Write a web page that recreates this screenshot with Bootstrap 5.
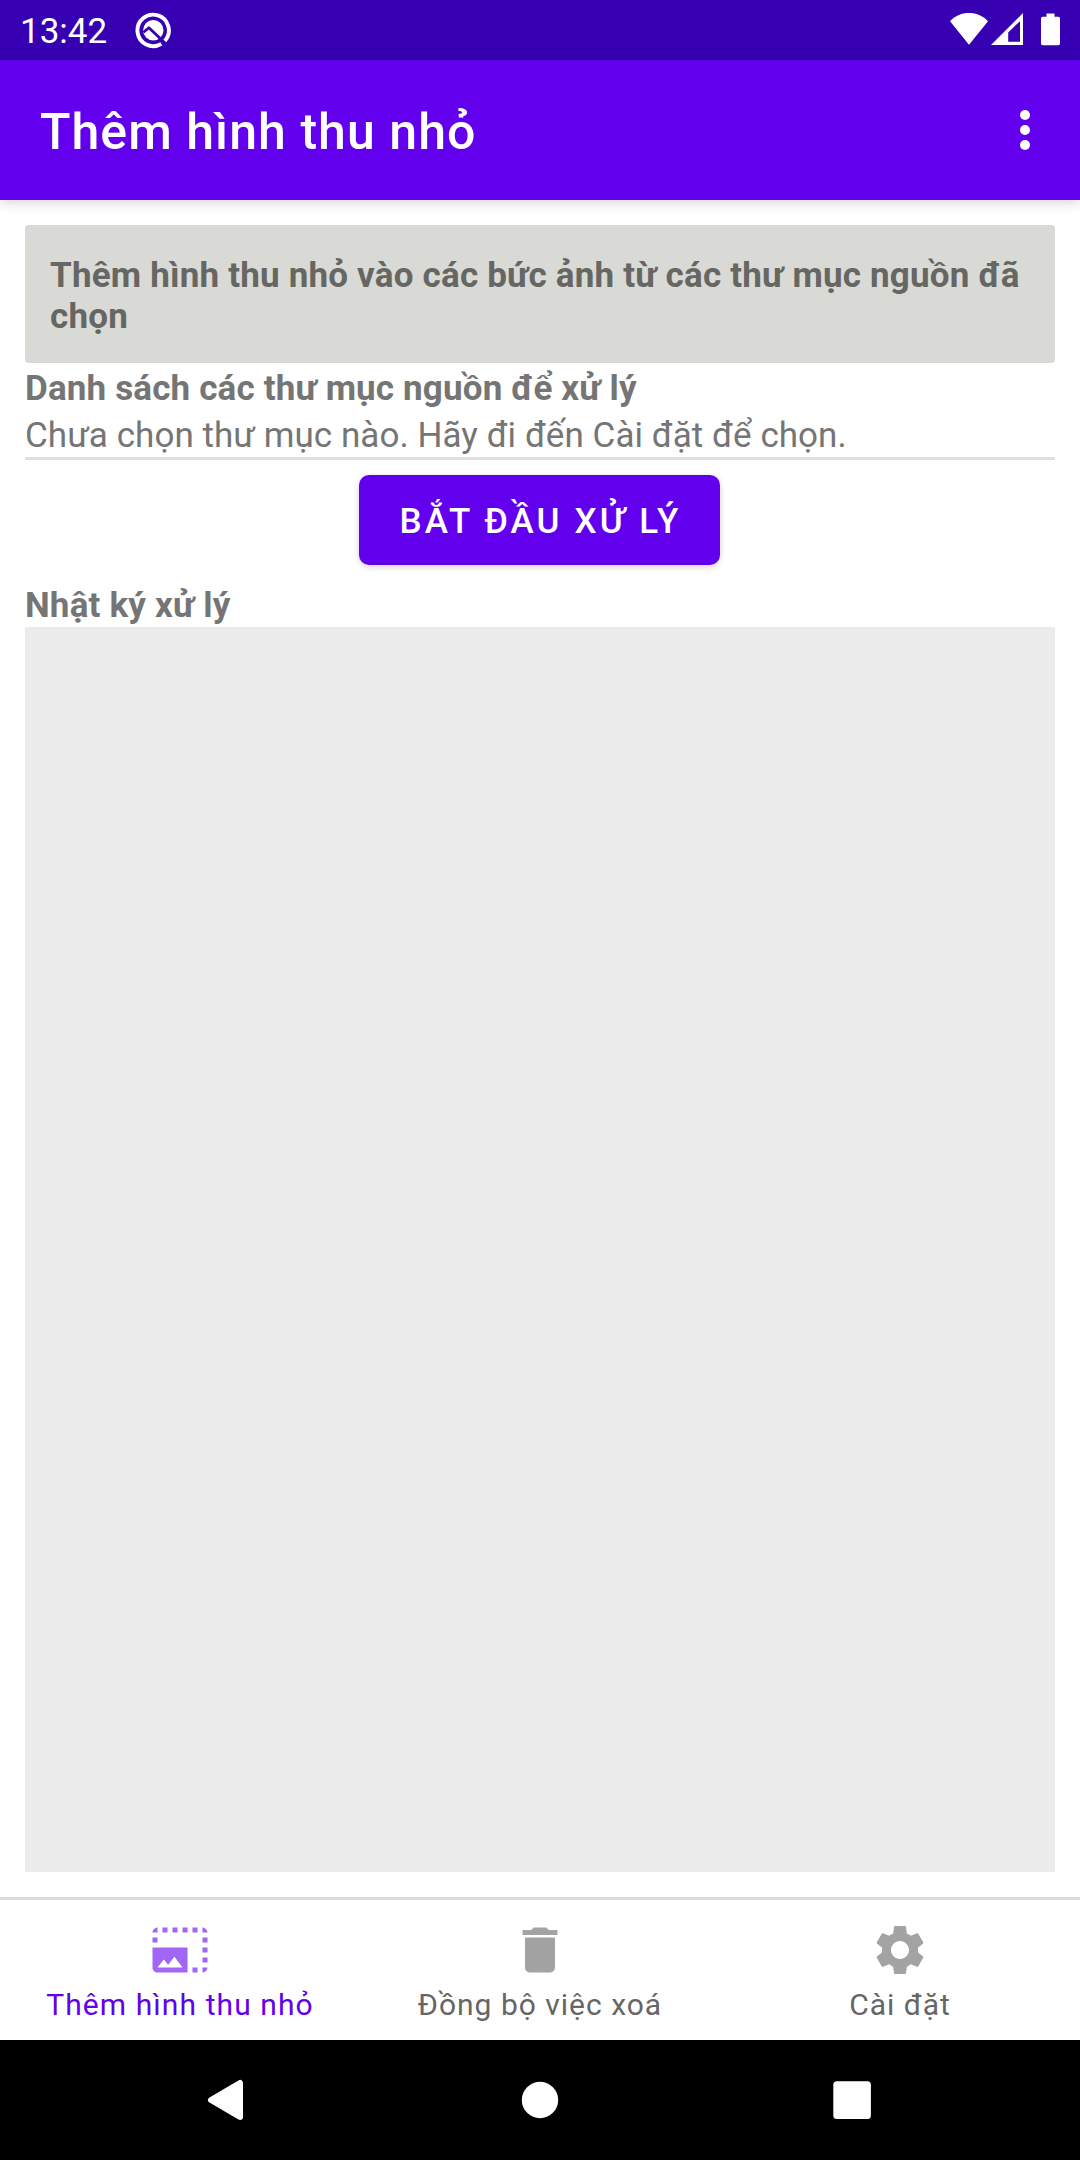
<!DOCTYPE html>
<html lang="vi">
<head>
<meta charset="utf-8">
<meta name="viewport" content="width=device-width, initial-scale=1">
<title>Thêm hình thu nhỏ</title>
<link href="https://cdn.jsdelivr.net/npm/bootstrap@5.3.0/dist/css/bootstrap.min.css" rel="stylesheet">
<style>
body{font-family:Roboto,"Noto Sans",sans-serif;font-size:35px;line-height:41px;color:#757575;background:#fff}
.screen{width:1080px;height:2160px;overflow:hidden}
.statusbar{height:60px;background:#3700b3;padding:0 15px 0 20px}
.clock{width:113px;padding-top:2px}
.appbar{height:140px;background:#6200ee;padding:0 45px 0 40px;box-shadow:0 2px 12px rgba(0,0,0,.18);--bs-navbar-brand-font-size:50px}
.appbar .navbar-brand{font-weight:500;letter-spacing:.021em;line-height:60px;padding:0;margin:4px 0 0}
.main-area{padding:25px}
.hint{height:138px;background:#d9dad5;color:#666663;border-radius:4px;padding:30px 20px 0 25px;letter-spacing:.19px}
.source-title{padding-top:5px;height:52px;letter-spacing:.15px}
.source-text{height:42px;letter-spacing:.05px}
.rule{height:3px;background:#e0e0e0}
.start-btn{--bs-btn-bg:#6200ee;--bs-btn-hover-bg:#6200ee;width:361px;height:90px;margin:15px 0 0 334px;border:0;border-radius:10px;padding:2px 0 0 2px;font-size:35px;font-weight:500;letter-spacing:.0893em;line-height:41px;box-shadow:0 2px 6px rgba(0,0,0,.18)}
.log-title{height:62px;padding-top:20px;letter-spacing:.17px}
.log-box{background:#ebebeb}
.tabs{height:143px;border-top:3px solid #dcdcdc}
.tabs .nav-link{width:360px;padding:20px 0 0;font-size:30px;line-height:35px;letter-spacing:.0333em;color:#666}
.tabs .nav-link svg{fill:#a3a3a3;margin-bottom:7px}
.tabs .nav-link.active{color:#6200ee;letter-spacing:.036em}
.tabs .nav-link.active svg{fill:#a166f5}
.sysbar{height:120px;background:#000;padding:0 72px}
svg{display:block;flex:none}
</style>
</head>
<body>
<div class="screen d-flex flex-column">
  <header class="statusbar d-flex align-items-center text-white">
    <span class="clock">13:42</span>
    <svg width="40" height="40" fill="none"><circle cx="20.3" cy="20.2" r="10.2" fill="#fff"/><path d="M10.500 22.300 15.900 17.700 31.500 32.500" stroke="#3700b3" stroke-width="2.800" stroke-linejoin="round"/><path d="M31.8 30.9A15.7 15.7 0 1 0 28.3 33.8" stroke="#fff" stroke-width="3.9"/></svg>
    <svg class="ms-auto" width="120" height="40" fill="#fff">
      <path d="M5 11.3C10.2 5.6 17 3 24 3S37.8 5.6 43 11.3L24 34.7Z"/>
      <path fill-rule="evenodd" d="M46 35 78 3V35ZM63.2 31.8H75V11.2L63.2 22.5Z"/>
      <path d="M101.5 3.5H109.5V6.7H113.3Q115 6.7 115 8.4V33.5Q115 35.2 113.3 35.2H97.7Q96 35.2 96 33.5V8.4Q96 6.7 97.7 6.7H101.5Z"/>
    </svg>
  </header>
  <nav class="appbar navbar flex-nowrap justify-content-between position-relative">
    <h1 class="navbar-brand text-white">Thêm hình thu nhỏ</h1>
    <svg width="20" height="60" fill="#fff"><circle cx="10" cy="15" r="5"/><circle cx="10" cy="30" r="5"/><circle cx="10" cy="45" r="5"/></svg>
  </nav>
  <main class="main-area d-flex flex-column flex-grow-1">
    <div class="hint fw-bold">Thêm hình thu nhỏ vào các bức ảnh từ các thư mục nguồn đã chọn</div>
    <div class="source-title fw-bold">Danh sách các thư mục nguồn để xử lý</div>
    <div class="source-text">Chưa chọn thư mục nào. Hãy đi đến Cài đặt để chọn.</div>
    <div class="rule"></div>
    <button class="start-btn btn btn-primary" type="button">BẮT ĐẦU XỬ LÝ</button>
    <div class="log-title fw-bold">Nhật ký xử lý</div>
    <div class="log-box flex-grow-1"></div>
  </main>
  <nav class="tabs nav flex-nowrap">
    <a class="nav-link active d-flex flex-column align-items-center" href="#"><svg width="60" height="60" viewBox="0 0 24 24"><path d="M21 15h2v2h-2v-2zm0-4h2v2h-2v-2zm2 8h-2v2c1 0 2-1 2-2zM13 3h2v2h-2V3zm8 4h2v2h-2V7zm0-4v2h2c0-1-1-2-2-2zM1 7h2v2H1V7zm16-4h2v2h-2V3zm0 16h2v2h-2v-2zM3 3C2 3 1 4 1 5h2V3zm6 0h2v2H9V3zM5 3h2v2H5V3zm-4 8v8c0 1.1.9 2 2 2h12V11H1zm2 8l2.5-3.21 1.79 2.15 2.5-3.22L13 19H3z"/></svg><span>Thêm hình thu nhỏ</span></a>
    <a class="nav-link d-flex flex-column align-items-center" href="#"><svg width="60" height="60" viewBox="0 0 24 24"><path d="M6 19c0 1.1.9 2 2 2h8c1.1 0 2-.9 2-2V7H6v12zM19 4h-3.5l-1-1h-5l-1 1H5v2h14V4z"/></svg><span>Đồng bộ việc xoá</span></a>
    <a class="nav-link d-flex flex-column align-items-center" href="#"><svg width="60" height="60" viewBox="0 0 24 24"><path d="M19.14 12.94c.04-.3.06-.61.06-.94 0-.32-.02-.64-.07-.94l2.03-1.58c.18-.14.23-.41.12-.61l-1.92-3.32c-.12-.22-.37-.29-.59-.22l-2.39.96c-.5-.38-1.03-.7-1.62-.94l-.36-2.54c-.04-.24-.24-.41-.48-.41h-3.84c-.24 0-.43.17-.47.41l-.36 2.54c-.59.24-1.13.57-1.62.94l-2.39-.96c-.22-.08-.47 0-.59.22L2.74 8.87c-.12.21-.08.47.12.61l2.03 1.58c-.05.3-.09.63-.09.94s.02.64.07.94l-2.03 1.58c-.18.14-.23.41-.12.61l1.92 3.32c.12.22.37.29.59.22l2.39-.96c.5.38 1.03.7 1.62.94l.36 2.54c.05.24.24.41.48.41h3.84c.24 0 .44-.17.47-.41l.36-2.54c.59-.24 1.13-.56 1.62-.94l2.39.96c.22.08.47 0 .59-.22l1.92-3.32c.12-.22.07-.47-.12-.61l-2.01-1.58zM12 15.6c-1.98 0-3.6-1.62-3.6-3.6s1.62-3.6 3.6-3.6 3.6 1.62 3.6 3.6-1.62 3.6-3.6 3.6z"/></svg><span>Cài đặt</span></a>
  </nav>
  <footer class="sysbar d-flex align-items-center justify-content-around">
    <svg width="60" height="60" fill="#fff" stroke="#fff" stroke-width="6" stroke-linejoin="round"><path d="M13 30 42 13V47Z"/></svg>
    <svg width="60" height="60" fill="#fff"><circle cx="30" cy="30" r="18.2"/></svg>
    <svg width="60" height="60" fill="#fff"><rect x="11.3" y="11.3" width="37.6" height="37.6" rx="3.5"/></svg>
  </footer>
</div>
<script src="https://cdn.jsdelivr.net/npm/bootstrap@5.3.0/dist/js/bootstrap.bundle.min.js"></script>
</body>
</html>
